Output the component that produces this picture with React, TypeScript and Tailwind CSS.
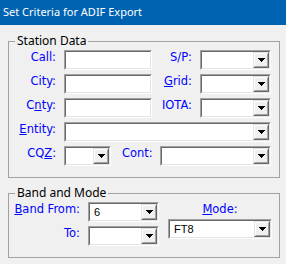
import type { ReactNode } from "react";

function Arrow() {
  return (
    <svg width="7" height="4" viewBox="0 0 7 4" shapeRendering="crispEdges">
      <rect x="0" y="0" width="7" height="1" fill="#000" />
      <rect x="1" y="1" width="5" height="1" fill="#000" />
      <rect x="2" y="2" width="3" height="1" fill="#000" />
      <rect x="3" y="3" width="1" height="1" fill="#000" />
    </svg>
  );
}

// sunken 3D box, like a classic Windows edit control
function Sunken({ className, children }: { className: string; children?: ReactNode }) {
  return (
    <div
      className={`flex h-[20px] shrink-0 border border-t-[#a0a0a0] border-l-[#a0a0a0] border-b-white border-r-white ${className}`}
    >
      <div className="flex min-w-0 flex-1 border border-t-[#696969] border-l-[#696969] border-b-[#e3e3e3] border-r-[#e3e3e3] bg-white">
        {children}
      </div>
    </div>
  );
}

function Combo({ className, value }: { className: string; value?: string }) {
  return (
    <Sunken className={className}>
      <span className="flex-1 truncate pl-[4px] font-['Liberation_Sans',sans-serif] text-[11px] leading-[16px] text-black">
        {value}
      </span>
      <div className="flex w-[16px] border border-t-[#e3e3e3] border-l-[#e3e3e3] border-b-[#696969] border-r-[#696969]">
        <div className="flex flex-1 items-center justify-center border border-t-white border-l-white border-b-[#a0a0a0] border-r-[#a0a0a0] bg-[#f0f0f0]">
          <Arrow />
        </div>
      </div>
    </Sunken>
  );
}

function Label({ className, children }: { className: string; children: ReactNode }) {
  return (
    <span className={`shrink-0 self-start pt-[1px] leading-[13px] text-[#0000ff] ${className}`}>
      {children}
    </span>
  );
}

export default function App() {
  return (
    <div className="h-[264px] w-[286px] overflow-hidden bg-[#f0f0f0] font-['DejaVu_Sans',sans-serif] text-[11.5px]">
      <div className="flex h-[25px] items-center bg-[#0063b1] pl-[3px] font-['Noto_Sans',sans-serif] text-[11px] text-white">
        Set Criteria for ADIF Export
      </div>

      <div className="pl-[8px] pt-[8px]">
        {/* Station Data */}
        <fieldset className="w-[272px] border border-[#a0a0a0] pb-[11px]">
          <legend className="ml-[6px] px-[2px] font-['Noto_Sans',sans-serif] text-[12px] leading-[16px] text-black">
            Station Data
          </legend>
          <div className="flex flex-col gap-[4px] pt-[1px]">
            <div className="flex">
              <Label className="w-[47px] text-right">Call:</Label>
              <Sunken className="ml-[8px] w-[88px]" />
              <Label className="w-[40px] text-right">S/P:</Label>
              <Combo className="ml-[8px] w-[71px]" />
            </div>
            <div className="flex">
              <Label className="w-[47px] text-right">City:</Label>
              <Sunken className="ml-[8px] w-[88px]" />
              <Label className="w-[40px] text-right">
                <u>G</u>rid:
              </Label>
              <Combo className="ml-[8px] w-[71px]" />
            </div>
            <div className="flex">
              <Label className="w-[47px] text-right">
                C<u>n</u>ty:
              </Label>
              <Sunken className="ml-[8px] w-[88px]" />
              <Label className="w-[40px] text-right">IOTA:</Label>
              <Combo className="ml-[8px] w-[71px]" />
            </div>
            <div className="flex">
              <Label className="w-[47px] text-right">
                <u>E</u>ntity:
              </Label>
              <Combo className="ml-[8px] w-[207px]" />
            </div>
            <div className="flex">
              <Label className="w-[47px] text-right">
                CQ<u>Z</u>:
              </Label>
              <Combo className="ml-[8px] w-[47px]" />
              <Label className="ml-[11px] w-[38px] text-left">Cont:</Label>
              <Combo className="w-[111px]" />
            </div>
          </div>
        </fieldset>

        {/* Band and Mode */}
        <fieldset className="mt-[7px] w-[272px] border border-[#a0a0a0] pb-[11px]">
          <legend className="ml-[6px] px-[2px] font-['Noto_Sans',sans-serif] text-[12px] leading-[16px] text-black">
            Band and Mode
          </legend>
          <div className="flex pt-[1px]">
            <div className="flex flex-col gap-[4px]">
              <div className="flex">
                <Label className="w-[71px] text-right">
                  <u>B</u>and From:
                </Label>
                <Combo className="ml-[8px] w-[71px]" value="6" />
              </div>
              <div className="flex">
                <Label className="w-[71px] text-right">To:</Label>
                <Combo className="ml-[8px] w-[71px]" />
              </div>
            </div>
            <div className="ml-[9px] flex w-[104px] flex-col items-center pt-[1px]">
              <span className="leading-[13px] text-[#0000ff]">
                <u>M</u>ode:
              </span>
              <Combo className="mt-[3px] w-[104px]" value="FT8" />
            </div>
          </div>
        </fieldset>
      </div>
    </div>
  );
}
